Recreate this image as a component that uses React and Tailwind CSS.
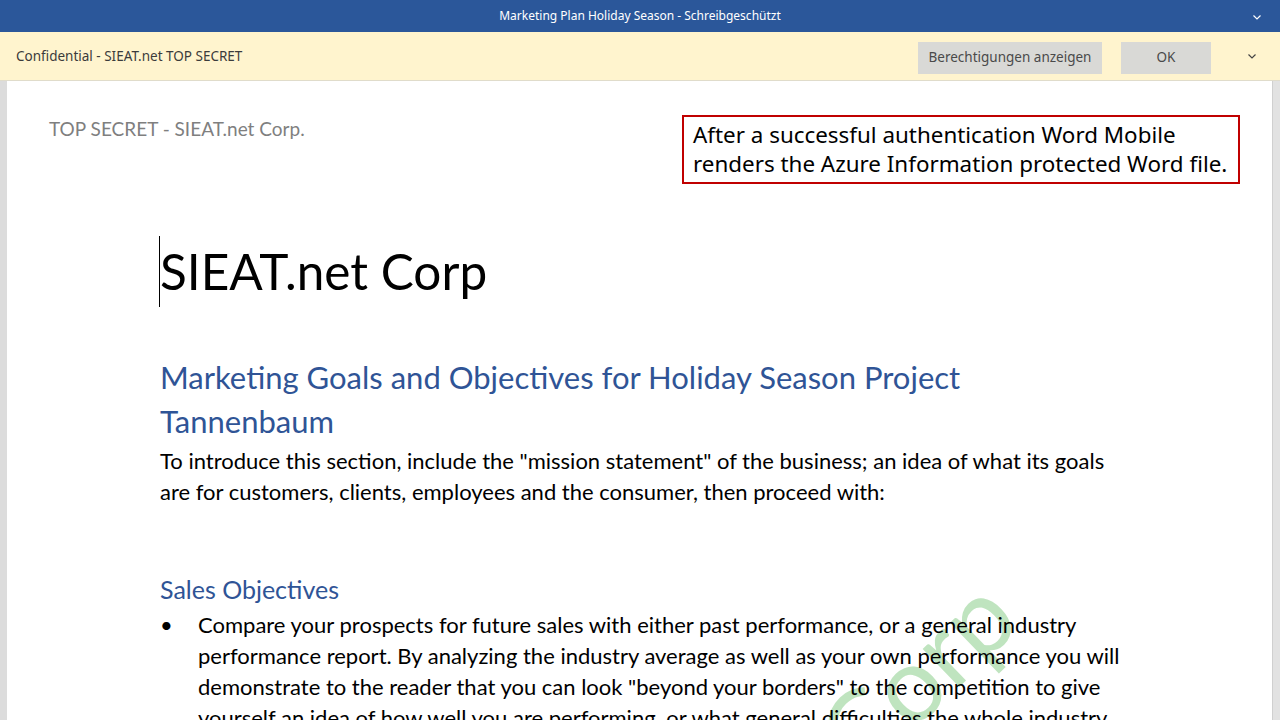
import React from "react";

const Chevron = ({ className }) => (
  <svg viewBox="0 0 12 12" className={className} fill="none" stroke="currentColor" strokeWidth="1.2">
    <path d="M2.5 4.5 L6 8 L9.5 4.5" />
  </svg>
);

const App = () => {
  return (
    <div className="h-[720px] w-[1280px] flex flex-col overflow-hidden bg-white">
      {/* title bar */}
      <div className="h-8 shrink-0 bg-[#2b579a] text-white flex items-center justify-center relative font-['Noto_Sans',sans-serif] text-[12px]">
        <span>Marketing Plan Holiday Season - Schreibgeschützt</span>
        <Chevron className="w-3 h-3 absolute right-[17px] top-[11px] text-white" />
      </div>

      {/* info bar */}
      <div className="h-[49px] shrink-0 bg-[#fff4ce] border-b border-[#e0dccb] flex items-center pl-4 pr-[22px] font-['Noto_Sans',sans-serif] shadow-[0_1px_2px_rgba(0,0,0,0.12)]">
        <span className="text-[13.5px] text-[#3b3b3b] flex-1">Confidential - SIEAT.net TOP SECRET</span>
        <button className="h-8 mt-[3px] w-[184px] bg-[#d9d9d6] text-[#4a4a4a] text-[13.5px]">Berechtigungen anzeigen</button>
        <button className="h-8 mt-[3px] w-[90px] ml-[19px] bg-[#d9d9d6] text-[#4a4a4a] text-[13.5px]">OK</button>
        <Chevron className="w-3 h-3 ml-[35px] text-[#444]" />
      </div>

      {/* document area */}
      <div className="flex-1 flex min-h-0">
        <div className="w-[7px] bg-[#dcdcdc]" />
        <div className="flex-1 relative overflow-hidden bg-white font-['Lato',sans-serif] text-black">
          {/* watermark */}
          <div className="absolute left-[788px] top-[541px] w-[240px] h-[104px] -rotate-[44deg] text-center text-[104px] leading-none text-[#bfe4bf] whitespace-nowrap select-none">
            Corp
          </div>

          <div className="relative">
            <div className="flex justify-between items-start pl-[42px] pr-[32px]">
              <div className="pt-[34px] text-[19px] text-[#7f7f7f]">TOP SECRET - SIEAT.net Corp.</div>
              <div className="mt-[34px] w-[558px] h-[69px] border-2 border-[#c00000] bg-white px-[9px] pt-[3px] font-['Noto_Sans',sans-serif] text-[22.4px] leading-[29px] text-black whitespace-nowrap">
                After a successful authentication Word Mobile
                <br />
                renders the Azure Information protected Word file.
              </div>
            </div>

            <div className="pl-[153px] pr-[100px]">
              <div className="mt-[51px] relative text-[49.5px] leading-[72px] text-black">
                <span className="absolute left-[-1px] top-[1px] h-[71px] w-px bg-black" />
                SIEAT.net Corp
              </div>

              <div className="mt-[48px] mb-[2px] text-[31px] leading-[44px] text-[#2f5496]">
                Marketing Goals and Objectives for Holiday Season Project
                <br />
                Tannenbaum
              </div>

              <div className="text-[22px] leading-[31px] whitespace-nowrap">
                To introduce this section, include the "mission statement" of the business; an idea of what its goals
                <br />
                are for customers, clients, employees and the consumer, then proceed with:
              </div>

              <div className="mt-[63px] mb-[1px] text-[25px] leading-[38px] text-[#2f5496]">Sales Objectives</div>

              <div className="flex text-[22px] leading-[31px] whitespace-nowrap">
                <span className="w-[38px] shrink-0">•</span>
                <div>
                  Compare your prospects for future sales with either past performance, or a general industry
                  <br />
                  performance report. By analyzing the industry average as well as your own performance you will
                  <br />
                  demonstrate to the reader that you can look "beyond your borders" to the competition to give
                  <br />
                  yourself an idea of how well you are performing, or what general difficulties the whole industry
                </div>
              </div>
            </div>
          </div>
        </div>
        <div className="w-[8px] bg-[#e2e2e2] border-l border-[#d0d0d0]" />
      </div>
    </div>
  );
};

export default App;
